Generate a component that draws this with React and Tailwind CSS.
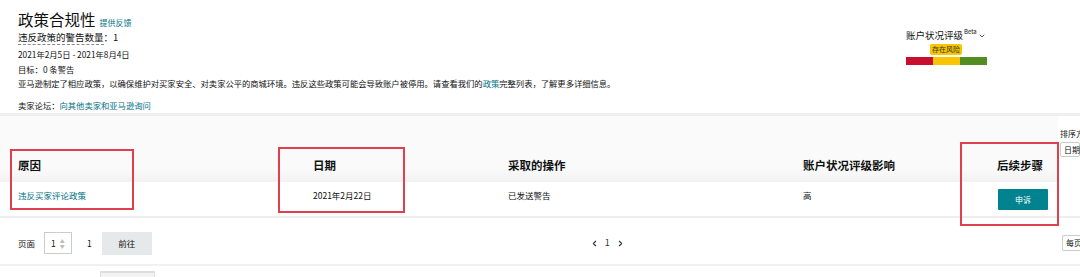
import { ChevronDown, ChevronLeft, ChevronRight } from 'lucide-react';

const font = { fontFamily: '"Noto Sans CJK SC", "Noto Sans", sans-serif' };

function RatingWidget() {
  return (
    <div className="w-[174px] pt-[28px] flex flex-col">
      <div className="flex items-start h-[14px] text-[9.5px] leading-[14px] text-[#0f1111]">
        <span>账户状况评级</span>
        <span className="text-[6px] leading-[8px] ml-[1px]">Beta</span>
        <ChevronDown className="w-[8px] h-[8px] mt-[4px] ml-[1px] text-[#555]" strokeWidth={3} />
      </div>
      <div className="ml-[24px] mt-[2px] w-[32px] h-[11px] bg-[#f7c600] rounded-[2px] text-[7px] leading-[11px] text-center text-[#333]">
        存在风险
      </div>
      <div className="flex mt-[2px] h-[8px]">
        <div className="w-[27px] bg-[#c8102e]" />
        <div className="w-[27px] bg-[#f8c500]" />
        <div className="w-[27px] bg-[#538c1f]" />
      </div>
    </div>
  );
}

function Header() {
  return (
    <div className="flex">
      <div className="flex-1 pl-[18px] pt-[8px] text-[#0f1111]">
        <div className="h-[22px] flex items-end gap-[4px]">
          <span className="text-[15.5px] leading-[22px]">政策合规性</span>
          <span className="text-[8px] leading-[14px] text-[#007185]">提供反馈</span>
        </div>
        <div className="h-[14px] text-[9.5px] leading-[14px]">
          <span className="border-b border-dashed border-[#888]">违反政策的警告数量</span>：1
        </div>
        <div className="mt-[3px] h-[14px] text-[8.3px] leading-[14px]">2021年2月5日 - 2021年8月4日</div>
        <div className="mt-[1px] h-[14px] text-[8.3px] leading-[14px]">目标：0 条警告</div>
        <div className="h-[14px] text-[8.3px] leading-[14px]">
          亚马逊制定了相应政策，以确保维护对买家安全、对卖家公平的商城环境。违反这些政策可能会导致账户被停用。请查看我们的
          <span className="text-[#007185]">政策</span>完整列表，了解更多详细信息。
        </div>
        <div className="mt-[8px] h-[14px] text-[8.3px] leading-[14px]">
          卖家论坛：<span className="text-[#007185]">向其他卖家和亚马逊询问</span>
        </div>
      </div>
      <RatingWidget />
    </div>
  );
}

const cols = 'grid grid-cols-[295px_195px_295px_194px_1fr] pl-[18px]';

function Table() {
  return (
    <div className="flex">
      <div className="w-[1058px] relative">
        <div className={`${cols} h-[66px] items-end pb-[9px] bg-gradient-to-b from-[#fafafa] from-80% to-[#f2f2f2] text-[11.5px] leading-[16px] font-bold text-[#0f1111]`}>
          <div>原因</div>
          <div>日期</div>
          <div>采取的操作</div>
          <div>账户状况评级影响</div>
          <div>后续步骤</div>
        </div>
        <div className={`${cols} h-[34px] items-start text-[8.5px] leading-[14px] text-[#0f1111]`}>
          <div className="pt-[6px] text-[#007185]">违反买家评论政策</div>
          <div className="pt-[6px]">2021年2月22日</div>
          <div className="pt-[6px]">已发送警告</div>
          <div className="pt-[6px]">高</div>
          <div className="pt-[7px]">
            <div className="w-[50px] h-[21px] ml-[1px] bg-[#00838f] text-white text-[8px] leading-[21px] text-center rounded-[1px]">申诉</div>
          </div>
        </div>

        {/* red annotation boxes */}
        <div className="absolute left-[10px] top-[33px] w-[124px] h-[61px] border-2 border-[#e0404e] pointer-events-none" />
        <div className="absolute left-[278px] top-[31px] w-[127px] h-[66px] border-2 border-[#e0404e] pointer-events-none" />
        <div className="absolute left-[960px] top-[26px] w-[99px] h-[84px] border-2 border-[#e0404e] pointer-events-none" />
      </div>
      <div className="flex-1 pl-[2px] pt-[12px] text-[8px] leading-[12px] text-[#0f1111] whitespace-nowrap overflow-hidden">
        <div>排序方式</div>
        <div className="mt-[2px] h-[15px] border border-[#ccc] rounded-[2px] px-[3px] leading-[13px] bg-white">日期</div>
      </div>
    </div>
  );
}

function Pagination() {
  return (
    <div className="flex items-center h-[46px] pt-[4px] pl-[18px] text-[8.5px] text-[#0f1111]">
      <span>页面</span>
      <div className="ml-[9px] w-[28px] h-[22px] border border-[#ccc] flex items-center pl-[6px] gap-[4px]">
        <span>1</span>
        <div className="flex flex-col text-[#bbb] leading-none">
          <span className="text-[5px]">▲</span>
          <span className="text-[5px]">▼</span>
        </div>
      </div>
      <span className="ml-[15px]">1</span>
      <div className="ml-[10px] w-[50px] h-[23px] bg-[#e6e9e9] flex items-center justify-center">前往</div>
      <div className="ml-[438px] flex items-center gap-[6px] text-[#333]">
        <ChevronLeft className="w-[9px] h-[9px]" strokeWidth={3} />
        <span className="text-[9px]">1</span>
        <ChevronRight className="w-[9px] h-[9px]" strokeWidth={3} />
      </div>
      <div className="ml-auto w-[18px] h-[16px] border border-[#ccc] border-r-0 rounded-l-[2px] pl-[3px] leading-[14px] text-[8px] overflow-hidden whitespace-nowrap">每页</div>
    </div>
  );
}

export default function App() {
  return (
    <div className="w-[1080px] h-[277px] bg-white overflow-hidden" style={font}>
      <Header />
      <div className="mt-[1px] h-[3px] bg-[#efefef]" />
      <Table />
      <div className="h-[2px] bg-[#eeeeee]" />
      <Pagination />
      <div className="h-[2px] bg-[#f0f0f0]" />
      <div className="mt-[5px] ml-[100px] w-[55px] h-[10px] border-t-2 border-x border-[#ddd] bg-[#f3f3f3]" />
    </div>
  );
}
